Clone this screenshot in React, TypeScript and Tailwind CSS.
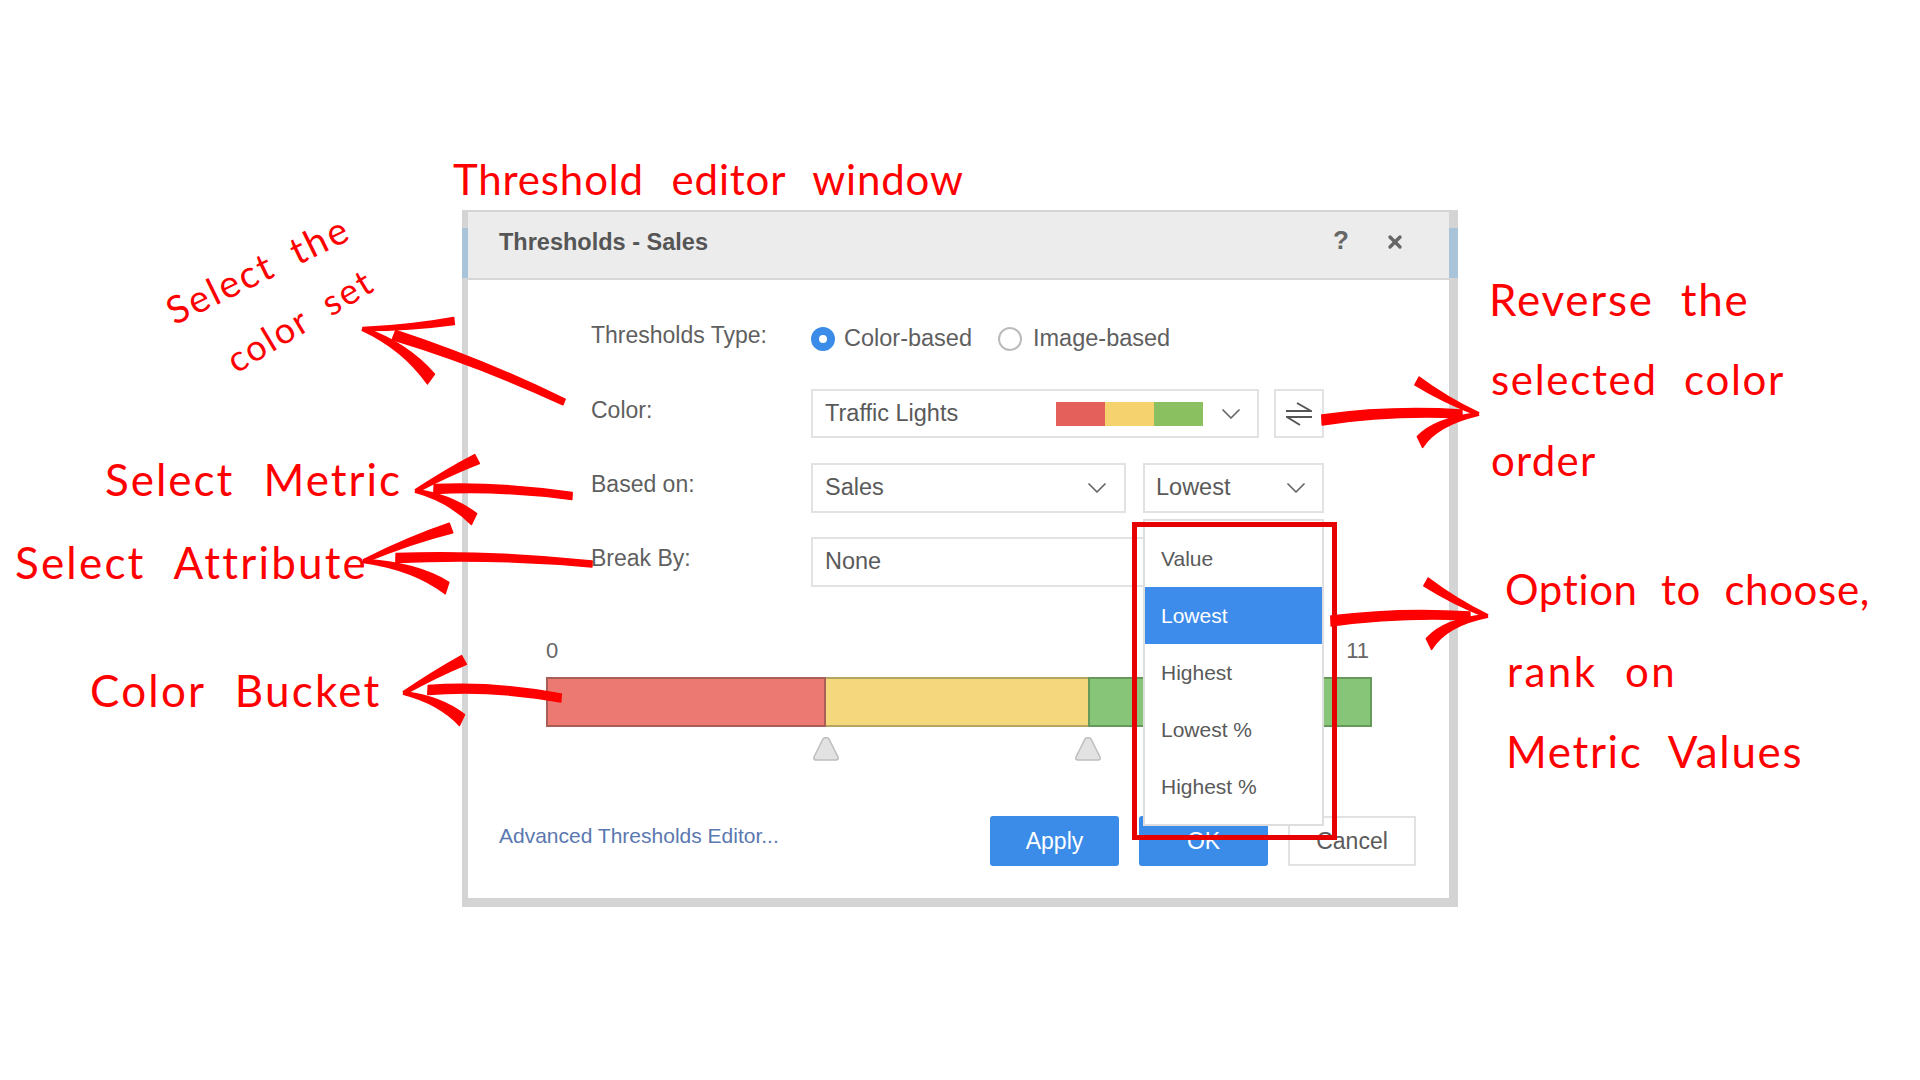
import React from 'react';
import { ChevronDown, X } from 'lucide-react';

function Field({ className, children }: { className: string; children: React.ReactNode }) {
  return (
    <div className={`flex items-center border-2 border-[#e2e2e2] bg-white text-[23.5px] text-[#5a5a5a] ${className}`}>
      {children}
    </div>
  );
}

function Label({ children }: { children: React.ReactNode }) {
  return <div className="w-[220px] shrink-0 pb-[7px] text-[23px] text-[#5f5f5f]">{children}</div>;
}

function Handle({ className }: { className: string }) {
  return (
    <svg viewBox="0 0 26 24" className={`h-[24px] w-[26px] ${className}`}>
      <path d="M10 2 Q13 -1 16 2 L25 20 Q26 23 23 23 L3 23 Q0 23 1 20 Z" fill="#e2e2e2" stroke="#bdbdbd" strokeWidth="1.5" />
    </svg>
  );
}

function Note({ className, children }: { className: string; children: React.ReactNode }) {
  return (
    <div className={`absolute z-20 whitespace-nowrap font-['Lato'] text-[#ff0000] leading-none ${className}`}>
      {children}
    </div>
  );
}

// tapered marker stroke: quadratic curve, width goes from w0 to w1
function Brush({ p, w0, w1 }: { p: number[]; w0: number; w1: number }) {
  const [x0, y0, cx, cy, x1, y1] = p;
  const len = Math.hypot(x1 - x0, y1 - y0);
  const nx = -(y1 - y0) / len;
  const ny = (x1 - x0) / len;
  const wm = (w0 + w1) / 4;
  const d = [
    `M${x0 + (nx * w0) / 2} ${y0 + (ny * w0) / 2}`,
    `Q${cx + nx * wm} ${cy + ny * wm} ${x1 + (nx * w1) / 2} ${y1 + (ny * w1) / 2}`,
    `L${x1 - (nx * w1) / 2} ${y1 - (ny * w1) / 2}`,
    `Q${cx - nx * wm} ${cy - ny * wm} ${x0 - (nx * w0) / 2} ${y0 - (ny * w0) / 2}`,
    'Z',
  ].join(' ');
  return <path d={d} fill="#ff0000" stroke="#ff0000" strokeWidth="1.5" strokeLinejoin="round" />;
}

function Arrows() {
  return (
    <svg viewBox="0 0 1920 1080" className="absolute inset-0 z-10 h-[1080px] w-[1920px]">
      {/* color set */}
      <Brush p={[394, 335, 480, 362, 564, 402]} w0={10} w1={6} />
      <Brush p={[363, 329, 410, 328, 454, 321]} w0={3} w1={7} />
      <Brush p={[363, 329, 405, 346, 431, 379]} w0={3} w1={12} />
      {/* metric */}
      <Brush p={[434, 489, 500, 486, 572, 496]} w0={9} w1={7} />
      <Brush p={[416, 491, 448, 472, 477, 459]} w0={3} w1={10} />
      <Brush p={[416, 491, 450, 498, 474, 519]} w0={3} w1={12} />
      {/* attribute */}
      <Brush p={[396, 558, 490, 554, 592, 564]} w0={9} w1={6} />
      <Brush p={[364, 561, 410, 540, 451, 528]} w0={3} w1={10} />
      <Brush p={[364, 561, 415, 566, 447, 588]} w0={3} w1={12} />
      {/* bucket */}
      <Brush p={[428, 690, 490, 685, 561, 698]} w0={9} w1={8} />
      <Brush p={[404, 693, 435, 674, 464, 660]} w0={3} w1={10} />
      <Brush p={[404, 693, 440, 700, 462, 720]} w0={3} w1={12} />
      {/* reverse */}
      <Brush p={[1322, 420, 1390, 410, 1462, 414]} w0={10} w1={8} />
      <Brush p={[1417, 381, 1445, 400, 1478, 414]} w0={9} w1={3} />
      <Brush p={[1420, 442, 1435, 422, 1478, 414]} w0={12} w1={3} />
      {/* rank option */}
      <Brush p={[1331, 621, 1400, 612, 1470, 616]} w0={10} w1={8} />
      <Brush p={[1426, 582, 1455, 602, 1487, 616]} w0={9} w1={3} />
      <Brush p={[1429, 644, 1445, 622, 1487, 616]} w0={12} w1={3} />
    </svg>
  );
}

export default function App() {
  return (
    <div className="relative h-[1080px] w-[1920px] overflow-hidden bg-white pt-[210px] pl-[462px] font-['Liberation_Sans',Arial,sans-serif]">
      {/* dialog */}
      <div className="relative flex h-[697px] w-[996px] flex-col border-t-2 border-r-[9px] border-b-[9px] border-l-[6px] border-[#d4d4d4]">
        <div className="absolute top-[16px] left-[-6px] h-[50px] w-[6px] bg-[#a9c3d8]" />
        <div className="absolute top-[16px] right-[-9px] h-[50px] w-[9px] bg-[#a9c3d8]" />

        <div className="flex h-[68px] shrink-0 items-center border-b-2 border-[#d6d6d6] bg-[#ececec] pr-[44px] pb-[4px] pl-[31px]">
          <span className="text-[23.5px] font-bold text-[#555]">Thresholds - Sales</span>
          <span className="mr-[36px] mb-[5px] ml-auto text-[26px] font-bold text-[#666]">?</span>
          <X size={20} strokeWidth={4} className="mb-[3px] text-[#666]" />
        </div>

        <div className="flex flex-col pt-[47px] pl-[123px]">
          <div className="flex h-[24px] items-center">
            <Label>Thresholds Type:</Label>
            <div className="h-[24px] w-[24px] rounded-full border-[8px] border-[#3b8ce8] bg-white" />
            <span className="ml-[9px] text-[23.5px] text-[#5f5f5f]">Color-based</span>
            <div className="ml-[26px] h-[24px] w-[24px] rounded-full border-2 border-[#bbb]" />
            <span className="ml-[11px] text-[23.5px] text-[#5f5f5f]">Image-based</span>
          </div>

          <div className="mt-[38px] flex h-[49px] items-center">
            <Label>Color:</Label>
            <Field className="h-[49px] w-[448px] pr-[10px] pl-[12px]">
              <span>Traffic Lights</span>
              <div className="ml-auto flex h-[24px] w-[147px]">
                <div className="flex-1 bg-[#e4605a]" />
                <div className="flex-1 bg-[#f5d26e]" />
                <div className="flex-1 bg-[#8bc060]" />
              </div>
              <ChevronDown size={32} strokeWidth={1.3} className="ml-[12px] text-[#666]" />
            </Field>
            <Field className="ml-[15px] h-[49px] w-[50px] justify-center">
              <svg viewBox="0 0 26 24" fill="none" stroke="#555" strokeWidth="2" className="h-[24px] w-[26px]">
                <path d="M0 9 H25 L11 1" />
                <path d="M26 15 H1 L14 23" />
              </svg>
            </Field>
          </div>

          <div className="mt-[25px] flex h-[50px] items-center">
            <Label>Based on:</Label>
            <Field className="h-[50px] w-[315px] pr-[11px] pl-[12px]">
              <span>Sales</span>
              <ChevronDown size={32} strokeWidth={1.3} className="ml-auto text-[#666]" />
            </Field>
            <div className="relative z-[5] ml-[17px]">
              <Field className="h-[50px] w-[181px] pr-[10px] pl-[11px]">
                <span>Lowest</span>
                <ChevronDown size={32} strokeWidth={1.3} className="ml-auto text-[#666]" />
              </Field>
              {/* rank menu */}
              <div className="absolute top-[56px] left-0 h-[307px] w-[181px] border-2 border-[#dedede] bg-white pt-[9px] text-[21px] text-[#5a5a5a]">
                <div className="flex h-[57px] items-center pl-[16px]">Value</div>
                <div className="flex h-[57px] items-center bg-[#3d8ceb] pl-[16px] text-white">Lowest</div>
                <div className="flex h-[57px] items-center pl-[16px]">Highest</div>
                <div className="flex h-[57px] items-center pl-[16px]">Lowest %</div>
                <div className="flex h-[57px] items-center pl-[16px]">Highest %</div>
              </div>
              <div className="absolute top-[59px] left-[-11px] h-[318px] w-[205px] border-[5px] border-[#e60000]" />
            </div>
          </div>

          <div className="mt-[24px] flex h-[50px] items-center">
            <Label>Break By:</Label>
            <Field className="h-[50px] w-[513px] pl-[12px]">
              <span>None</span>
            </Field>
          </div>
        </div>

        <div className="mt-[51px] flex h-[24px] w-[904px] items-center justify-between pr-[3px] pl-[78px] text-[22px] text-[#666]">
          <span>0</span>
          <span>11</span>
        </div>
        <div className="mt-[15px] ml-[78px] flex h-[50px] w-[826px]">
          <div className="w-[280px] border-2 border-[#a95e58] bg-[#ec7a72]" />
          <div className="w-[262px] border-y-2 border-[#b5a460] bg-[#f5d77e]" />
          <div className="flex-1 border-2 border-[#659a5a] bg-[#87c578]" />
        </div>
        <div className="mt-[10px] ml-[78px] flex">
          <Handle className="ml-[267px]" />
          <Handle className="ml-[236px]" />
        </div>

        <div className="mt-[55px] flex items-start pr-[33px] pl-[31px]">
          <a href="#" className="mt-[4px] text-[21px] text-[#5b78b0]">Advanced Thresholds Editor...</a>
          <div className="ml-auto flex gap-[20px] text-[23px]">
            <button className="h-[50px] w-[129px] rounded-[3px] bg-[#3b8ce8] text-white">Apply</button>
            <button className="h-[50px] w-[129px] rounded-[3px] bg-[#3b8ce8] text-white">OK</button>
            <button className="h-[50px] w-[128px] border-2 border-[#e2e2e2] bg-white text-[#5a5a5a]">Cancel</button>
          </div>
        </div>
      </div>

      <Arrows />

      <Note className="top-[158px] left-[453px] text-[42px] tracking-[0.02em] [word-spacing:16px]">Threshold editor window</Note>
      <Note className="top-[293px] left-[168px] origin-left -rotate-[26deg] text-[38px] tracking-[0.06em] [word-spacing:10px]">Select the</Note>
      <Note className="top-[344px] left-[229px] origin-left -rotate-[31deg] text-[36px] tracking-[0.06em] [word-spacing:10px]">color set</Note>
      <Note className="top-[457px] left-[105px] text-[44px] tracking-[0.045em] [word-spacing:16px]">Select Metric</Note>
      <Note className="top-[540px] left-[15px] text-[44px] tracking-[0.05em] [word-spacing:16px]">Select Attribute</Note>
      <Note className="top-[668px] left-[90px] text-[44px] tracking-[0.05em] [word-spacing:16px]">Color Bucket</Note>
      <Note className="top-[277px] left-[1489px] text-[44px] tracking-[0.04em] [word-spacing:14px]">Reverse the</Note>
      <Note className="top-[358px] left-[1491px] text-[42px] tracking-[0.04em] [word-spacing:14px]">selected color</Note>
      <Note className="top-[439px] left-[1491px] text-[42px] tracking-[0.03em]">order</Note>
      <Note className="top-[568px] left-[1505px] text-[42px] tracking-[0.015em] [word-spacing:12px]">Option to choose,</Note>
      <Note className="top-[650px] left-[1507px] text-[42px] tracking-[0.06em] [word-spacing:14px]">rank on</Note>
      <Note className="top-[729px] left-[1506px] text-[44px] tracking-[0.037em] [word-spacing:14px]">Metric Values</Note>
    </div>
  );
}
